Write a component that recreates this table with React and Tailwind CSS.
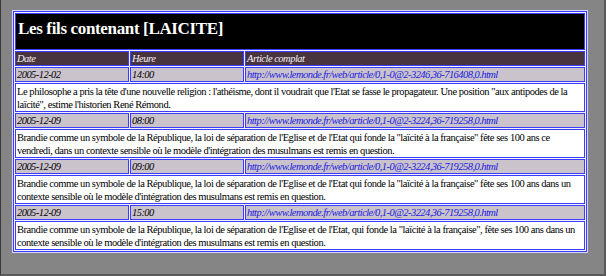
import React from "react";

const rows = [
  {
    date: "2005-12-02",
    time: "14:00",
    url: "http://www.lemonde.fr/web/article/0,1-0@2-3246,36-716408,0.html",
    lines: [
      "Le philosophe a pris la tête d'une nouvelle religion : l'athéisme, dont il voudrait que l'Etat se fasse le propagateur. Une position \"aux antipodes de la",
      "laïcité\", estime l'historien René Rémond.",
    ],
  },
  {
    date: "2005-12-09",
    time: "08:00",
    url: "http://www.lemonde.fr/web/article/0,1-0@2-3224,36-719258,0.html",
    lines: [
      "Brandie comme un symbole de la République, la loi de séparation de l'Eglise et de l'Etat qui fonde la \"laïcité à la française\" fête ses 100 ans ce",
      "vendredi, dans un contexte sensible où le modèle d'intégration des musulmans est remis en question.",
    ],
  },
  {
    date: "2005-12-09",
    time: "09:00",
    url: "http://www.lemonde.fr/web/article/0,1-0@2-3224,36-719258,0.html",
    lines: [
      "Brandie comme un symbole de la République, la loi de séparation de l'Eglise et de l'Etat qui fonde la \"laïcité à la française\" fête ses 100 ans dans un",
      "contexte sensible où le modèle d'intégration des musulmans est remis en question.",
    ],
  },
  {
    date: "2005-12-09",
    time: "15:00",
    url: "http://www.lemonde.fr/web/article/0,1-0@2-3224,36-719258,0.html",
    lines: [
      "Brandie comme un symbole de la République, la loi de séparation de l'Eglise et de l'Etat, qui fonde la \"laïcité à la française\", fête ses 100 ans dans un",
      "contexte sensible où le modèle d'intégration des musulmans est remis en question.",
    ],
  },
];

const cell = "border border-[#3c3cff] px-[1px] p-0 align-middle";

const App = () => {
  return (
    <div
      className="w-[606px] h-[276px] bg-[#858585] border-l border-l-[#3a3a3a] border-r-2 border-r-[#5a5a5a] border-b-2 border-b-[#5a5a5a] pt-[10px] pl-[11px] overflow-hidden"
      style={{ fontFamily: '"Liberation Serif", "Times New Roman", serif' }}
    >
      <div className="w-[576px] border border-[#d4d4ff]">
        <table className="w-full border-separate border-spacing-[1px] border border-[#3c3cff] bg-[#f2f2ff] table-fixed">
          <colgroup>
            <col className="w-[114px]" />
            <col className="w-[114px]" />
            <col />
          </colgroup>
          <tbody>
            <tr>
              <td
                colSpan={3}
                className="h-[37px] bg-black border border-[#3c3cff] align-top pl-[2px] pt-[5px] text-white font-bold text-[17px] leading-[20px] tracking-[-0.35px]"
              >
                Les fils contenant [LAICITE]
              </td>
            </tr>
            <tr className="h-[15px] text-[10.5px] leading-[13px] italic text-[#f4f0f4] tracking-[-0.5px]">
              <td className={`${cell} bg-[#48343f]`}>Date</td>
              <td className={`${cell} bg-[#48343f]`}>Heure</td>
              <td className={`${cell} bg-[#48343f]`}>Article complat</td>
            </tr>
            {rows.map((r, i) => (
              <React.Fragment key={i}>
                <tr className="h-[15px] text-[10.5px] leading-[13px] italic tracking-[-0.55px]">
                  <td className={`${cell} bg-[#cbc3cb] text-black`}>{r.date}</td>
                  <td className={`${cell} bg-[#cbc3cb] text-black`}>{r.time}</td>
                  <td className={`${cell} bg-[#cbc3cb] text-[#2020e0] whitespace-nowrap overflow-hidden`}>
                    {r.url}
                  </td>
                </tr>
                <tr className="h-[29px] text-[10.5px] leading-[13px] tracking-[-0.45px] text-black">
                  <td colSpan={3} className={`${cell} bg-white whitespace-nowrap overflow-hidden`}>
                    {r.lines[0]}
                    <br />
                    {r.lines[1]}
                  </td>
                </tr>
              </React.Fragment>
            ))}
          </tbody>
        </table>
      </div>
    </div>
  );
};

export default App;
